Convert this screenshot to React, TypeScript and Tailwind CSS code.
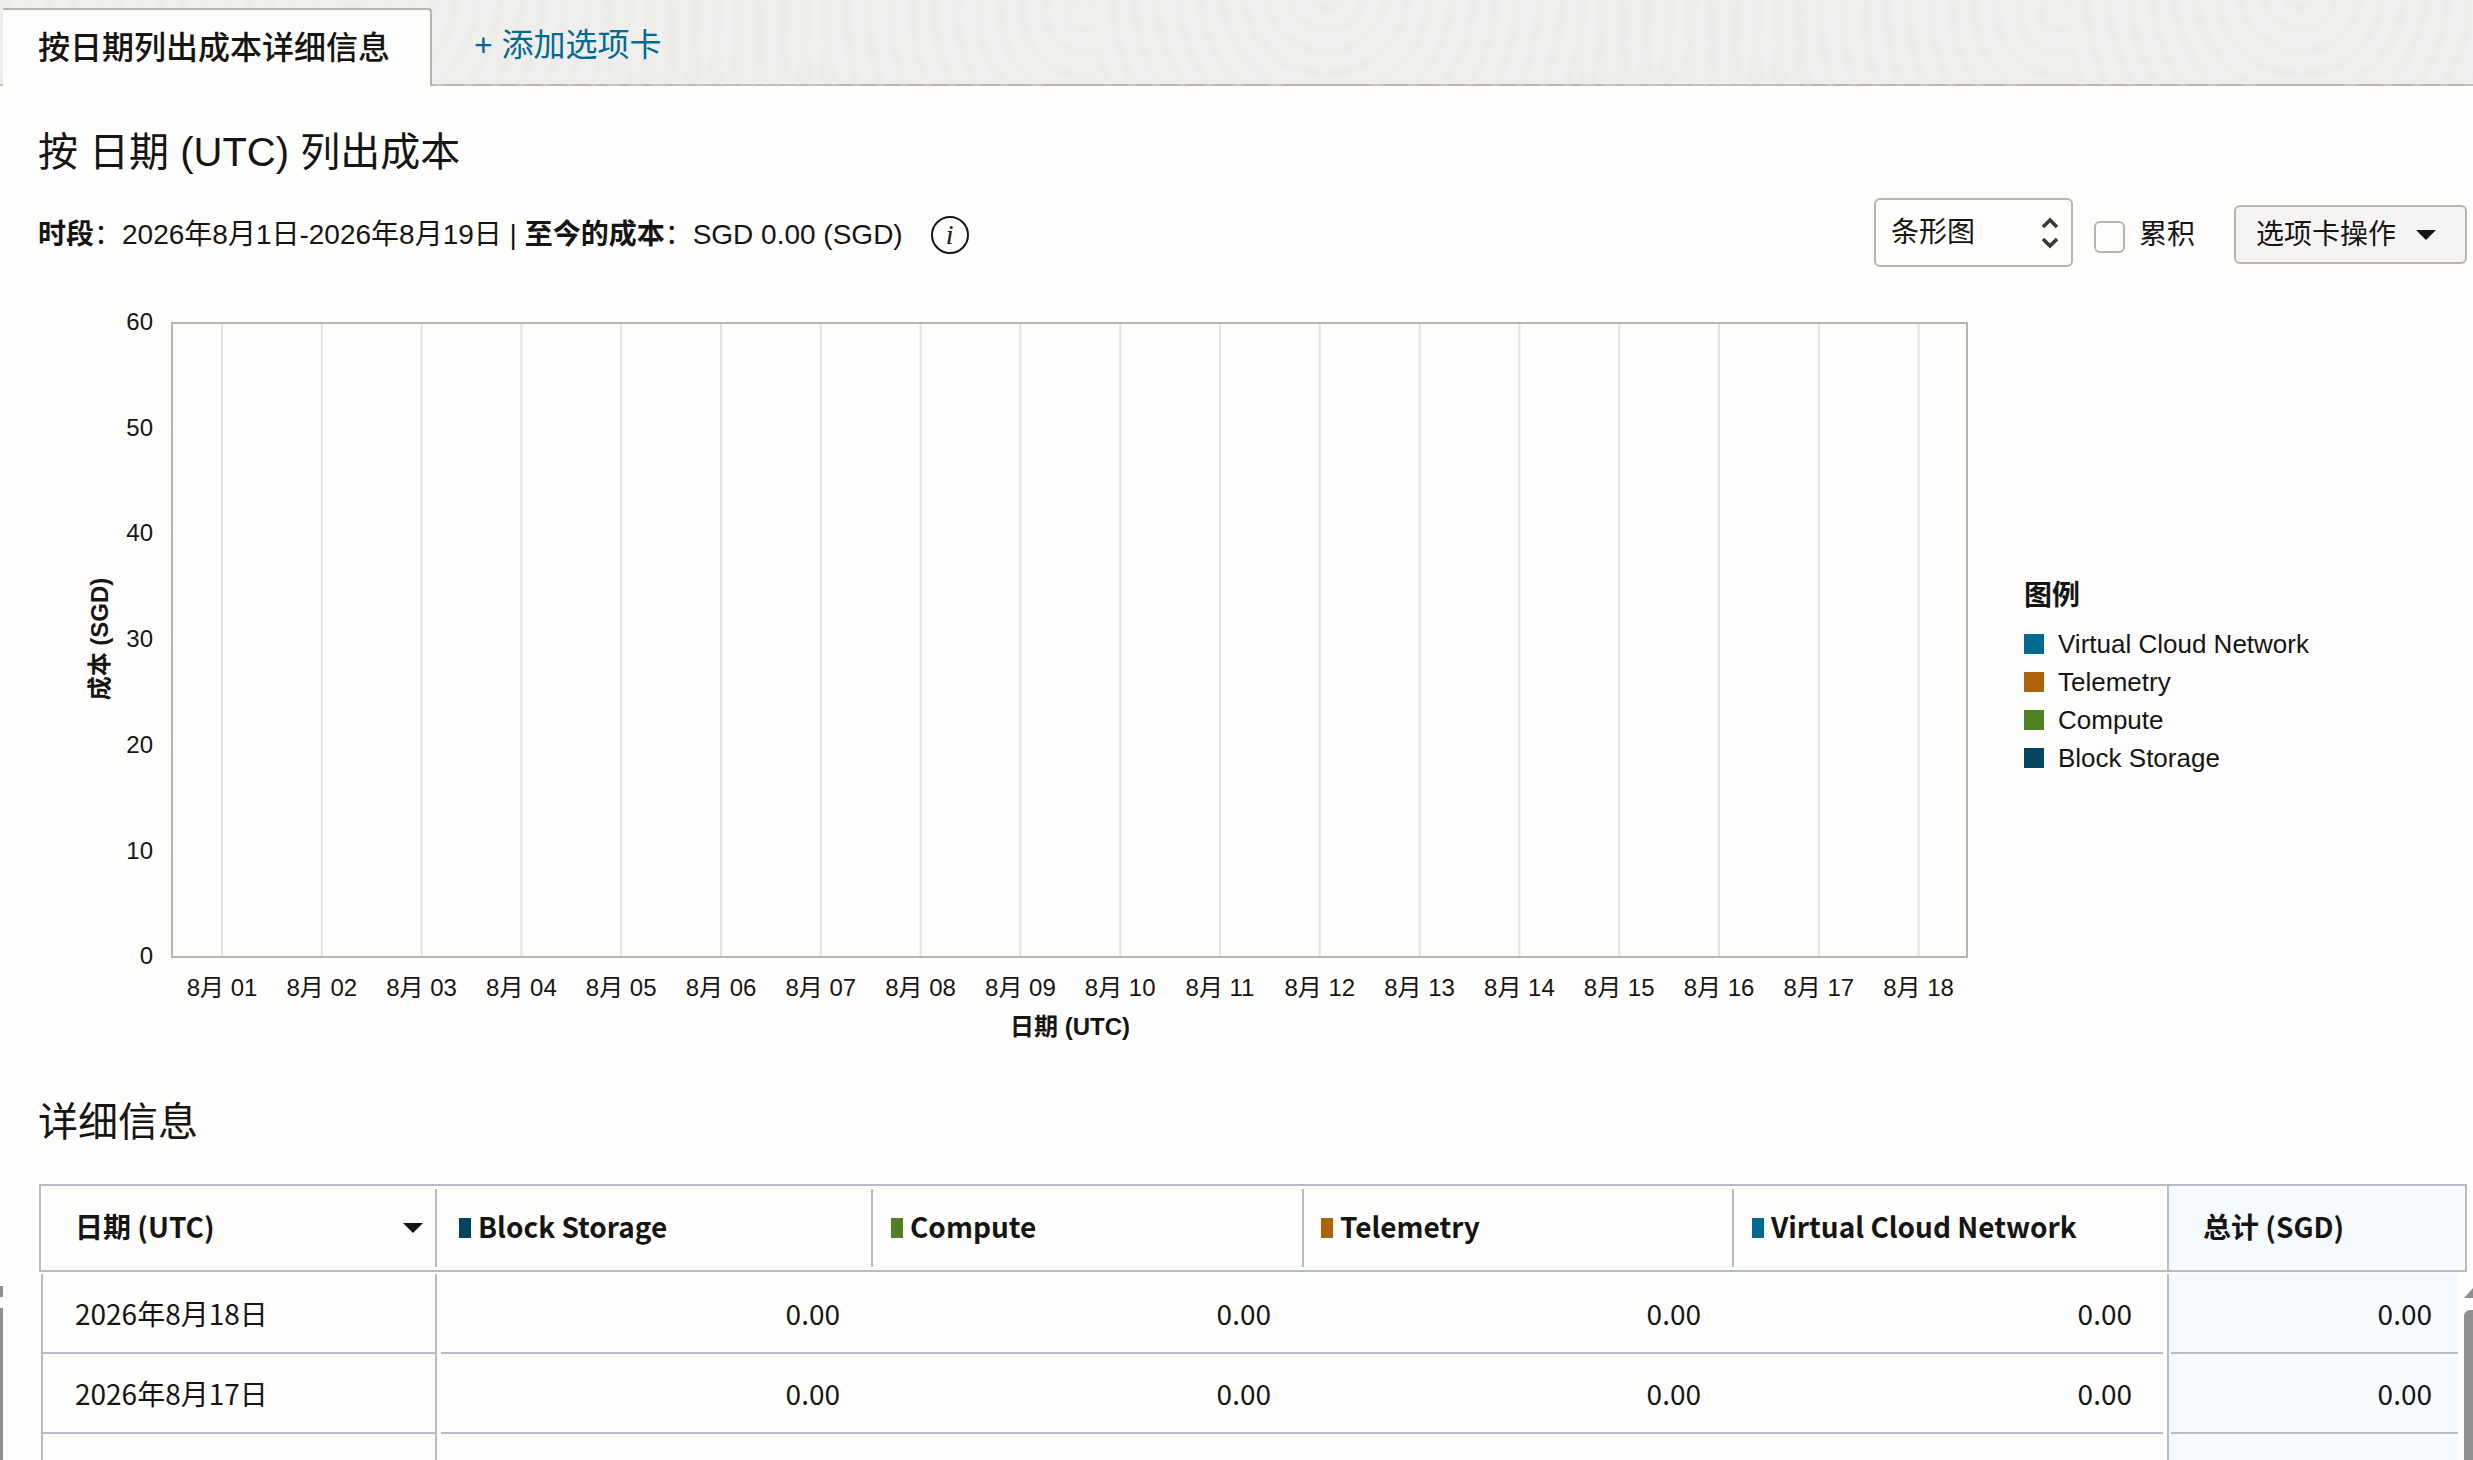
const cjk = "font-['Liberation_Sans','Noto_Sans_CJK_SC',sans-serif]";
const days = ['01','02','03','04','05','06','07','08','09','10','11','12','13','14','15','16','17','18'];
const yTicks = [60, 50, 40, 30, 20, 10, 0];
const legend = [
  ['Virtual Cloud Network', 'bg-[#006b8f]'],
  ['Telemetry', 'bg-[#ac630c]'],
  ['Compute', 'bg-[#4f8024]'],
  ['Block Storage', 'bg-[#04445e]'],
];
const rows = ['2026年8月18日', '2026年8月17日', ''];

function Texture() {
  const radii = Array.from({ length: 22 }, (_, i) => 16 + i * 22);
  return (
    <svg className="absolute inset-0 blur-[2px]" width="2473" height="84">
      <defs>
        <pattern id="grain" width="974" height="84" patternUnits="userSpaceOnUse" x="122" y="0">
          <g fill="none" stroke="#ecebe9" strokeWidth="6">
            {radii.map(r => <circle key={`a${r}`} cx="961" cy="15" r={r} />)}
            {radii.map(r => <circle key={`b${r}`} cx="230" cy="-8" r={r} />)}
          </g>
        </pattern>
      </defs>
      <rect width="2473" height="84" fill="url(#grain)" />
    </svg>
  );
}

function Chart() {
  const font = "'Liberation Sans','Noto Sans CJK SC',sans-serif";
  return (
    <svg width="1980" height="746" viewBox="0 0 1980 746" className="block shrink-0">
      {days.map((d, i) => (
        <line key={d} x1={222 + i * 99.8} x2={222 + i * 99.8} y1="25" y2="657" stroke="#e3e3e3" strokeWidth="2" />
      ))}
      <rect x="172" y="24" width="1795" height="634" fill="none" stroke="#b9b5ae" strokeWidth="2" />
      {yTicks.map((t, i) => (
        <text key={t} x="153" y={31 + i * 105.7} textAnchor="end" fontSize="24" fontFamily={font} fill="#161513">{t}</text>
      ))}
      {days.map((d, i) => (
        <text key={d} x={222 + i * 99.8} y="697" textAnchor="middle" fontSize="24" fontFamily={font} fill="#161513">{`8月 ${d}`}</text>
      ))}
      <text x="1070" y="736" textAnchor="middle" fontSize="24" fontWeight="700" fontFamily={font} fill="#161513">日期 (UTC)</text>
      <text transform="translate(108 340) rotate(-90)" textAnchor="middle" fontSize="24" fontWeight="700" fontFamily={font} fill="#161513">成本 (SGD)</text>
    </svg>
  );
}

function HeadCell({ w, pad, color, label, sort, total, noSep }: { w: string; pad: string; color?: string; label: string; sort?: boolean; total?: boolean; noSep?: boolean }) {
  return (
    <div className={`${w} ${pad} h-full relative flex items-center shrink-0 ${total ? 'bg-[#f5fafe] border-l-2 border-[#b6bcc5]' : ''}`}>
      {!total && !noSep && <div className="absolute right-0 top-[3px] bottom-[3px] w-[2px] bg-[#b6bcc5]" />}
      {color && <span className={`w-[12px] h-[20px] mr-[7px] ${color}`} />}
      <span className="pb-[5px] text-[28px] font-bold text-[#161513] font-['Noto_Sans_CJK_SC','Noto_Sans',sans-serif] leading-none">{label}</span>
      {sort && <span className="absolute left-[362px] top-[37px] w-0 h-0 border-l-[10px] border-r-[10px] border-t-[10px] border-l-transparent border-r-transparent border-t-[#161513]" />}
    </div>
  );
}

function ValueCell({ w }: { w: string }) {
  return (
    <div className={`${w} h-full flex items-center justify-end shrink-0 pr-[31px]`}>
      <span>0.00</span>
    </div>
  );
}

export default function App() {
  return (
    <div className={`w-[2473px] h-[1460px] overflow-hidden bg-[#fdfdfb] text-[#161513] relative ${cjk}`}>
      {/* tab strip */}
      <div className="h-[86px] bg-[#f0efed] border-b-2 border-[#b9b5ae] flex items-end relative">
        <Texture />
        <div className="relative ml-[3px] w-[429px] h-[78px] -mb-[2px] bg-[#fdfdfb] border-t-2 border-r-2 border-[#b9b5ae] rounded-tr-[4px] pl-[35px] pt-[16px] text-[32px] leading-[44px] font-medium">
          按日期列出成本详细信息
        </div>
        <div className="relative ml-[42px] self-start mt-[23px] text-[32px] leading-[44px] text-[#006b8f]">+ 添加选项卡</div>
      </div>

      <div className="pl-[38px] pr-[6px]">
        <h1 className="mt-[42px] text-[40px] leading-[48px] font-normal">按 日期 (UTC) 列出成本</h1>

        <div className="mt-[23px] h-[72px] flex items-center">
          <div className="text-[28px] leading-[40px] whitespace-nowrap">
            <b>时段</b>：2026年8月1日-2026年8月19日 | <b>至今的成本</b>：SGD 0.00 (SGD)
          </div>
          <span className="ml-[28px] w-[38px] h-[38px] rounded-full border-2 border-[#161513] flex items-center justify-center italic font-['Liberation_Serif',serif] text-[28px] leading-none">i</span>
          <div className="ml-auto flex items-center">
            <div className="mb-[5px] w-[199px] h-[69px] border-2 border-[#b9b5ae] rounded-[6px] flex items-center justify-between pl-[15px] pr-[11px] text-[28px]">
              <span>条形图</span>
              <svg width="20" height="34" viewBox="0 0 20 34" fill="none" stroke="#3a3835" strokeWidth="3.5">
                <path d="M3 11 L10 4 L17 11" />
                <path d="M3 23 L10 30 L17 23" />
              </svg>
            </div>
            <span className="mt-[3px] ml-[21px] w-[31px] h-[32px] border-2 border-[#b9b5ae] rounded-[6px]" />
            <span className="ml-[14px] text-[28px]">累积</span>
            <div className="mb-[1px] ml-[39px] w-[233px] h-[59px] border-2 border-[#b9b5ae] rounded-[6px] bg-[#f5f4f2] flex items-center pl-[20px] text-[28px]">
              选项卡操作
              <span className="ml-[20px] w-0 h-0 border-l-[10px] border-r-[10px] border-t-[10px] border-l-transparent border-r-transparent border-t-[#161513]" />
            </div>
          </div>
        </div>
      </div>

      {/* chart and legend */}
      <div className="flex mt-[28px]">
        <Chart />
        <div className="ml-[44px] mt-[278px]">
          <div className="text-[28px] leading-[38px] font-bold">图例</div>
          <div className="mt-[10px] flex flex-col">
            {legend.map(([name, c]) => (
              <div key={name} className="h-[38px] flex items-center">
                <span className={`w-[20px] h-[20px] ${c}`} />
                <span className="ml-[14px] text-[26px] leading-none">{name}</span>
              </div>
            ))}
          </div>
        </div>
      </div>

      <h2 className="ml-[38px] mt-[53px] text-[40px] leading-[48px] font-normal">详细信息</h2>

      {/* table */}
      <div className="ml-[39px] mt-[38px] w-[2428px]">
        <div className="h-[88px] border-2 border-[#b6bcc5] flex items-center">
          <HeadCell w="w-[396px]" pad="pl-[34px]" label="日期 (UTC)" sort />
          <HeadCell w="w-[436px]" pad="pl-[22px]" color="bg-[#04445e]" label="Block Storage" />
          <HeadCell w="w-[431px]" pad="pl-[18px]" color="bg-[#4f8024]" label="Compute" />
          <HeadCell w="w-[430px]" pad="pl-[17px]" color="bg-[#ac630c]" label="Telemetry" />
          <HeadCell w="w-[433px]" pad="pl-[18px]" color="bg-[#006b8f]" label="Virtual Cloud Network" noSep />
          <HeadCell w="flex-1" pad="pl-[34px]" label="总计 (SGD)" total />
        </div>
        <div className="pt-[2px] text-[28px] font-['Noto_Sans_CJK_SC','Noto_Sans',sans-serif]">
          {rows.map((r, i) => (
            <div key={i} className="h-[80px] flex items-stretch ml-[2px] mr-[9px]">
              <div className="w-[396px] border-l-2 border-r-2 border-[#b6bcc5] shrink-0 flex">
                <div className="flex-1 border-b-2 border-[#b6bcc5] flex items-center pl-[32px]">{r}</div>
              </div>
              <div className="w-[1722px] shrink-0 border-b-2 border-[#b6bcc5] ml-[4px] flex items-center">
                {r && <ValueCell w="w-[430px]" />}
                {r && <ValueCell w="w-[431px]" />}
                {r && <ValueCell w="w-[430px]" />}
                {r && <ValueCell w="w-[431px]" />}
              </div>
              <div className="flex-1 bg-[#f5fafe] border-l-2 border-[#b6bcc5] ml-[4px] flex">
                <div className="flex-1 ml-[2px] border-b-2 border-[#b6bcc5] flex items-center justify-end pr-[26px]">{r && '0.00'}</div>
              </div>
            </div>
          ))}
        </div>
      </div>

      {/* scrollbars of the outer frame */}
      <svg className="absolute right-0 top-[1288px]" width="9" height="10" viewBox="0 0 9 10"><path d="M0 10 L9 0 L9 10 Z" fill="#8f8f8f" /></svg>
      <div className="absolute right-0 top-[1310px] bottom-0 w-[9px] bg-[#8f8f8f] rounded-tl-[6px]" />
      <div className="absolute left-0 top-[1286px] h-[11px] w-[3px] bg-[#8f8f8f]" />
      <div className="absolute left-0 top-[1308px] bottom-0 w-[3px] bg-[#8f8f8f]" />
    </div>
  );
}
